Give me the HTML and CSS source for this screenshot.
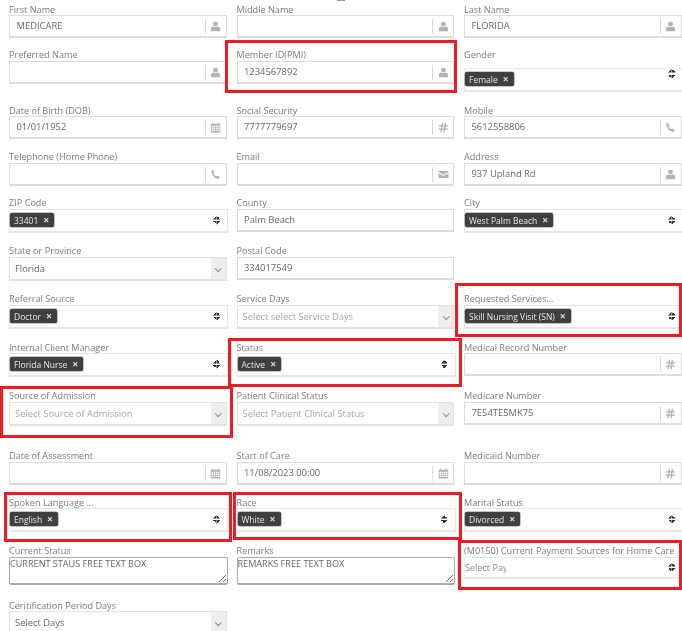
FILE: index.html
```html
<!DOCTYPE html>
<html lang="en">
<head>
<meta charset="utf-8">
<title>Patient form</title>
<link rel="stylesheet" href="styles.css">
</head>
<body>
<svg class="defs" width="0" height="0" aria-hidden="true">
  <symbol id="i-user" viewBox="0 0 12 12"><circle cx="6" cy="3.4" r="2.7"/><path d="M1 11.2V8.6C1 7 2.3 6.2 3.6 6c.7.6 1.5.9 2.4.9s1.700-.3 2.400-.9C9.700 6.200 11 7 11 8.600v2.600z"/></symbol>
  <symbol id="i-cal" viewBox="0 0 12 12"><path d="M.8 2h10.400v9.500H.8zM2.600.6h1v2.200h-1zM8.400.6h1v2.200h-1z"/><path fill="#fff" d="M1.700 4.200h1.600v1.400H1.700zM4 4.200h1.600v1.400H4zM6.400 4.200H8v1.400H6.400zM8.700 4.200h1.600v1.400H8.700zM1.700 6.300h1.600v1.400H1.700zM4 6.300h1.600v1.400H4zM6.400 6.300H8v1.400H6.400zM8.700 6.300h1.600v1.400H8.700zM1.700 8.400h1.600v1.400H1.700zM4 8.400h1.600v1.400H4zM6.400 8.400H8v1.400H6.400zM8.700 8.400h1.600v1.400H8.700z"/></symbol>
  <symbol id="i-phone" viewBox="0 0 12 12"><path d="M3.200 1 1.400 2c-.5 3.800 3.700 9 8 8.800l1.300-1.900-2.500-1.900-1.300 1C5 7.400 4.200 6 3.800 4.600l1.200-1z"/></symbol>
  <symbol id="i-hash" viewBox="0 0 12 12"><path d="M4 .8h1.600l-.4 2.700h1.700L7.300.8h1.600l-.4 2.700H11v1.500H8.300l-.3 2h2.600v1.500H7.800l-.4 2.700H5.800l.4-2.700H4.500l-.4 2.700H2.500l.4-2.700H.8V7h2.400l.3-2H1.200V3.500h2.500zM5 5l-.3 2h1.700l.3-2z"/></symbol>
  <symbol id="i-mail" viewBox="0 0 12 12"><path d="M.6 2.200h10.800v1L6 6.400.6 3.200zM.6 4.500 6 7.700l5.400-3.200v5.300H.6z"/></symbol>
</svg>

<main class="form">
  <div class="row h46 near">
    <div class="field"><label class="lbl">First Name</label><div class="input"><span class="val">MEDICARE</span><span class="addon"><svg class="ico"><use href="#i-user"/></svg></span></div></div>
    <div class="field"><label class="lbl">Middle Name</label><div class="input"><span class="val"></span><span class="addon"><svg class="ico"><use href="#i-user"/></svg></span></div></div>
    <div class="field"><label class="lbl">Last Name</label><div class="input"><span class="val">FLORIDA</span><span class="addon"><svg class="ico"><use href="#i-user"/></svg></span></div></div>
  </div>
  <div class="row h55">
    <div class="field"><label class="lbl">Preferred Name</label><div class="input"><span class="val"></span><span class="addon"><svg class="ico"><use href="#i-user"/></svg></span></div></div>
    <div class="field"><label class="lbl">Member ID(PMI)</label><div class="input"><span class="val">1234567892</span><span class="addon"><svg class="ico"><use href="#i-user"/></svg></span></div></div>
    <div class="field"><label class="lbl">Gender</label><div class="multi low"><span class="tag">Female<i class="x">×</i></span><span class="sort"></span></div></div>
  </div>
  <div class="row h47 near">
    <div class="field"><label class="lbl">Date of Birth (DOB)</label><div class="input"><span class="val">01/01/1952</span><span class="addon"><svg class="ico"><use href="#i-cal"/></svg></span></div></div>
    <div class="field"><label class="lbl">Social Security</label><div class="input"><span class="val">7777779697</span><span class="addon"><svg class="ico"><use href="#i-hash"/></svg></span></div></div>
    <div class="field"><label class="lbl">Mobile</label><div class="input"><span class="val">5612558806</span><span class="addon"><svg class="ico"><use href="#i-phone"/></svg></span></div></div>
  </div>
  <div class="row h46">
    <div class="field"><label class="lbl">Telephone (Home Phone)</label><div class="input"><span class="val"></span><span class="addon"><svg class="ico"><use href="#i-phone"/></svg></span></div></div>
    <div class="field"><label class="lbl">Email</label><div class="input"><span class="val"></span><span class="addon"><svg class="ico"><use href="#i-mail"/></svg></span></div></div>
    <div class="field"><label class="lbl">Address</label><div class="input"><span class="val">937 Upland Rd</span><span class="addon"><svg class="ico"><use href="#i-user"/></svg></span></div></div>
  </div>
  <div class="row h48">
    <div class="field"><label class="lbl">ZIP Code</label><div class="multi"><span class="tag">33401<i class="x">×</i></span><span class="sort"></span></div></div>
    <div class="field"><label class="lbl">County</label><div class="input"><span class="val">Palm Beach</span></div></div>
    <div class="field"><label class="lbl">City</label><div class="multi"><span class="tag">West Palm Beach<i class="x">×</i></span><span class="sort"></span></div></div>
  </div>
  <div class="row h48">
    <div class="field"><label class="lbl">State or Province</label><div class="drop"><span class="dval">Florida</span><span class="chev"></span></div></div>
    <div class="field"><label class="lbl">Postal Code</label><div class="input"><span class="val">334017549</span></div></div>
    <div class="field"></div>
  </div>
  <div class="row h48">
    <div class="field"><label class="lbl">Referral Source</label><div class="multi"><span class="tag">Doctor<i class="x">×</i></span><span class="sort"></span></div></div>
    <div class="field"><label class="lbl">Service Days</label><div class="drop"><span class="dval ph">Select select Service Days</span><span class="chev"></span></div></div>
    <div class="field"><label class="lbl">Requested Services<span class="more">...</span></label><div class="multi"><span class="tag">Skill Nursing Visit (SN)<i class="x">×</i></span><span class="sort"></span></div></div>
  </div>
  <div class="row h49 near">
    <div class="field"><label class="lbl">Internal Client Manager</label><div class="multi"><span class="tag">Florida Nurse<i class="x">×</i></span><span class="sort"></span></div></div>
    <div class="field"><label class="lbl">Status</label><div class="multi"><span class="tag">Active<i class="x">×</i></span><span class="sort"></span></div></div>
    <div class="field"><label class="lbl">Medical Record Number</label><div class="input"><span class="val"></span><span class="addon"><svg class="ico"><use href="#i-hash"/></svg></span></div></div>
  </div>
  <div class="row h60">
    <div class="field"><label class="lbl">Source of Admission</label><div class="drop"><span class="dval ph">Select Source of Admission</span><span class="chev"></span></div></div>
    <div class="field"><label class="lbl">Patient Clinical Status</label><div class="drop"><span class="dval ph">Select Patient Clinical Status</span><span class="chev"></span></div></div>
    <div class="field"><label class="lbl">Medicare Number</label><div class="input"><span class="val">7E54TE5MK75</span><span class="addon"><svg class="ico"><use href="#i-hash"/></svg></span></div></div>
  </div>
  <div class="row h46">
    <div class="field"><label class="lbl">Date of Assessment</label><div class="input"><span class="val"></span><span class="addon"><svg class="ico"><use href="#i-cal"/></svg></span></div></div>
    <div class="field"><label class="lbl">Start of Care</label><div class="input"><span class="val">11/08/2023 00:00</span><span class="addon"><svg class="ico"><use href="#i-cal"/></svg></span></div></div>
    <div class="field"><label class="lbl">Medicaid Number</label><div class="input"><span class="val"></span><span class="addon"><svg class="ico"><use href="#i-hash"/></svg></span></div></div>
  </div>
  <div class="row h49 near">
    <div class="field"><label class="lbl">Spoken Language <span class="more">...</span></label><div class="multi"><span class="tag">English<i class="x">×</i></span><span class="sort"></span></div></div>
    <div class="field"><label class="lbl">Race</label><div class="multi"><span class="tag">White<i class="x">×</i></span><span class="sort"></span></div></div>
    <div class="field"><label class="lbl">Marital Status</label><div class="multi"><span class="tag">Divorced<i class="x">×</i></span><span class="sort"></span></div></div>
  </div>
  <div class="row h54">
    <div class="field"><label class="lbl">Current Status</label><textarea class="area" readonly>CURRENT STAUS FREE TEXT BOX</textarea></div>
    <div class="field"><label class="lbl">Remarks</label><textarea class="area" readonly>REMARKS FREE TEXT BOX</textarea></div>
    <div class="field"><label class="lbl">(M0150) Current Payment Sources for Home Care</label><div class="multi short"><span class="cut">Select Pay</span><span class="sort"></span></div></div>
  </div>
  <div class="row h46 near">
    <div class="field"><label class="lbl">Ceritification Period Days</label><div class="drop"><span class="dval">Select Days</span><span class="chev"></span></div></div>
    <div class="field"></div>
    <div class="field"></div>
  </div>
</main>

<div class="edge"></div>
<div class="mark m-member"></div>
<div class="mark m-services"></div>
<div class="mark m-status"></div>
<div class="mark m-source"></div>
<div class="mark m-lang"></div>
<div class="mark m-race"></div>
<div class="mark m-pay"></div>
</body>
</html>
```
FILE: styles.css
```css
* { box-sizing: border-box; }
html, body { margin: 0; height: 631px; overflow: hidden; background: #fff; }
body {
  position: relative;
  font-family: "Open Sans", "Liberation Sans", sans-serif;
  font-size: 9.4px;
  color: #666;
  filter: blur(0.4px);
}
.defs { position: absolute; }
.form { padding: 2px 0 0 9px; }
.row {
  display: grid;
  grid-template-columns: 217.5px 217.5px 217.5px;
  column-gap: 10px;
}
.h46 { height: 46px; }
.h47 { height: 47px; }
.h48 { height: 48px; }
.h49 { height: 49px; }
.h54 { height: 54px; }
.h55 { height: 55px; }
.h60 { height: 60px; }

.field { min-width: 0; }
.lbl {
  display: block;
  height: 13px;
  font-size: 9.15px;
  line-height: 14px;
  color: #7b7b7b;
  white-space: nowrap;
}
.near .lbl { line-height: 16px; }
.more { color: #3d85c6; }

.input {
  display: flex;
  align-items: center;
  height: 23px;
  border: 1px solid #dcdcdc;
  border-bottom-width: 2px;
  background: #fff;
}
.val { flex: 1; padding-left: 6.5px; color: #666; line-height: 20px; }
.addon {
  display: flex;
  align-items: center;
  justify-content: center;
  width: 21px;
  height: 15px;
  border-left: 1px solid #d8d8d8;
}
.ico { width: 11px; height: 11px; fill: #b3b3b3; }

.multi {
  position: relative;
  display: flex;
  align-items: center;
  height: 24px;
  margin-right: -1.5px;
  padding: 0 0 1px 0;
  border: 1px solid #e6e6e6;
  border-bottom-width: 2px;
  background: #fff;
}
.low { margin-top: 7px; }
.low .sort {
  top: -1px;
  height: 11px;
  width: 11px;
  right: 5px;
  margin-top: 0;
  background-color: #fff;
  background-position: 2px 1px, 5.5px 1px, 2px 6.5px, 5.5px 6.500px;
}
.short { height: 22px; border-left-color: #eee; }
.tag {
  display: inline-flex;
  align-items: center;
  height: 14px;
  padding: 0 5px 0 4px;
  border-radius: 2px;
  background: #3f3f3f;
  box-shadow: 0 0 0 0.5px #888;
  color: #e8e8e8;
  font-size: 8.5px;
  white-space: nowrap;
}
.x {
  margin-left: 5px;
  font-style: normal;
  font-weight: 700;
  font-size: 10.5px;
  line-height: 1;
  color: #ddd;
}
.sort {
  position: absolute;
  top: 50%;
  right: 7px;
  width: 7px;
  height: 9px;
  margin-top: -5px;
  background-image:
    linear-gradient(to bottom right, transparent 50%, #333 50%),
    linear-gradient(to bottom left, transparent 50%, #333 50%),
    linear-gradient(to top right, transparent 50%, #333 50%),
    linear-gradient(to top left, transparent 50%, #333 50%);
  background-size: 3.5px 3.5px;
  background-repeat: no-repeat;
  background-position: 0 0, 3.5px 0, 0 5.5px, 3.5px 5.5px;
}
.cut {
  display: block;
  width: 41px;
  overflow: hidden;
  font-size: 9.1px;
  color: #8a8a8a;
  white-space: nowrap;
}

.drop {
  display: flex;
  align-items: center;
  height: 24px;
  border: 1px solid #e2e2e2;
  border-bottom-width: 2px;
  background: #fff;
}
.dval { flex: 1; padding-left: 5px; color: #666; }
.ph { color: #a6a6a6; }
.chev {
  position: relative;
  align-self: stretch;
  width: 15px;
  background: #eee;
}
.chev::after {
  content: "";
  position: absolute;
  top: 8px;
  left: 5.5px;
  width: 3.5px;
  height: 3.5px;
  border-right: 1px solid #888;
  border-bottom: 1px solid #888;
  transform: rotate(45deg);
}

.area {
  display: block;
  width: calc(100% + 1px);
  margin: 0;
  height: 28px;
  padding: 0;
  border: 1px solid #aaa;
  border-bottom-width: 2px;
  border-radius: 2px;
  outline: 0;
  font-family: inherit;
  font-size: 9.1px;
  line-height: 12px;
  color: #666;
  resize: both;
}

.edge { position: absolute; left: 337px; top: 0; width: 8px; height: 1px; background: #999; }
.mark { position: absolute; border: 3.5px solid #ed1c24; pointer-events: none; }
.m-member { left: 225px; top: 40px; width: 232px; height: 53px; }
.m-services { left: 455px; top: 283px; width: 227px; height: 54px; }
.m-status { left: 228px; top: 338px; width: 234px; height: 49px; }
.m-source { left: 0; top: 386px; width: 233px; height: 52px; }
.m-lang { left: 4px; top: 492px; width: 228px; height: 50px; }
.m-race { left: 233px; top: 492px; width: 229px; height: 48px; }
.m-pay { left: 458px; top: 540px; width: 224px; height: 50px; }
```
